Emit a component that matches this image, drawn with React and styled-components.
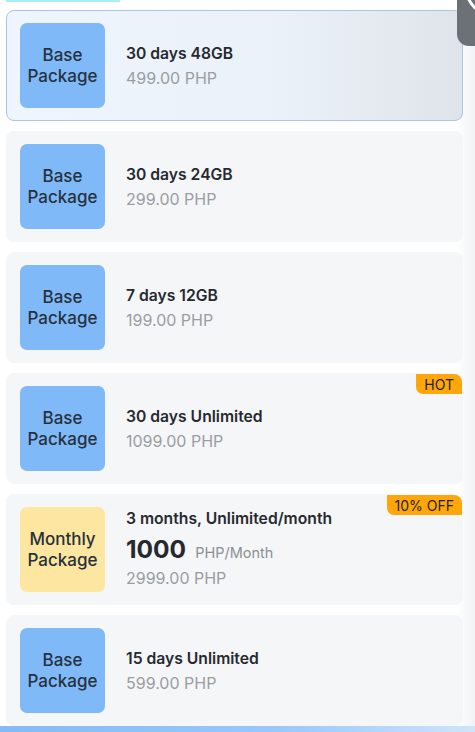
import React from "react";
import styled, { createGlobalStyle } from "styled-components";

const GlobalStyle = createGlobalStyle`
  html, body { margin: 0; padding: 0; background: #fff; }
  body { font-family: Inter, "Noto Sans", Roboto, sans-serif; overflow: hidden; }
`;

const packages = [
  { id: 1, kind: "base", title: "30 days 48GB", price: "499.00 PHP", active: true },
  { id: 2, kind: "base", title: "30 days 24GB", price: "299.00 PHP" },
  { id: 3, kind: "base", title: "7 days 12GB", price: "199.00 PHP" },
  { id: 4, kind: "base", title: "30 days Unlimited", price: "1099.00 PHP", tag: "HOT" },
  {
    id: 5,
    kind: "monthly",
    title: "3 months, Unlimited/month",
    monthly: "1000",
    price: "2999.00 PHP",
    tag: "10% OFF",
  },
  { id: 6, kind: "base", title: "15 days Unlimited", price: "599.00 PHP" },
];

const Page = styled.div`
  position: relative;
  width: 475px;
  height: 732px;
  overflow: hidden;
  background: linear-gradient(90deg, #ffffff 0%, #ffffff 96%, #f1f3f5 100%);
`;

const TopStrip = styled.div`
  width: 114px;
  height: 2px;
  margin-left: 6px;
  margin-bottom: 8px;
  background: #a6f1ef;
`;

const List = styled.div`
  display: flex;
  flex-direction: column;
  gap: 10px;
  padding-left: 6px;
  width: 457px;
`;

const Card = styled.div`
  position: relative;
  box-sizing: border-box;
  height: 111px;
  display: flex;
  align-items: center;
  gap: 21px;
  padding: 0 13px;
  border-radius: 8px;
  background: ${(p) =>
    p.$active
      ? "linear-gradient(90deg, #eff5fc 0%, #ebf1f8 60%, #dfe4ea 100%)"
      : "#f5f6f7"};
  border: 1px solid ${(p) => (p.$active ? "#a9c5e8" : "#f5f6f7")};
`;

const Badge = styled.div`
  flex: none;
  width: 85px;
  height: 85px;
  border-radius: 7px;
  background: ${(p) => (p.$kind === "monthly" ? "#fde69f" : "#80b9f7")};
  display: flex;
  align-items: center;
  justify-content: center;
  text-align: center;
  font-size: 17px;
  font-weight: 500;
  line-height: 21px;
  color: #27313d;
`;

const Info = styled.div`
  display: flex;
  flex-direction: column;
`;

const Title = styled.div`
  font-size: 15.7px;
  font-weight: 600;
  line-height: 25px;
  color: #262a30;
`;

const MonthlyTitle = styled(Title)`
  line-height: 20px;
  margin-bottom: 5px;
`;

const Price = styled.div`
  font-size: 16px;
  font-weight: 400;
  line-height: 25px;
  color: #9a9da2;
`;

const MonthlyRow = styled.div`
  display: flex;
  align-items: baseline;
  gap: 9px;
  height: 32px;
`;

const Amount = styled.span`
  font-size: 24.5px;
  font-weight: 700;
  color: #26292e;
`;

const Unit = styled.span`
  font-size: 14.5px;
  color: #8c8f94;
`;

const Tag = styled.div`
  position: absolute;
  top: 0;
  right: 0;
  height: 20px;
  padding: 0 8px;
  display: flex;
  align-items: center;
  background: #ffa60a;
  border-radius: 0 8px 0 7px;
  font-size: 14px;
  color: #1f1f1f;
`;

const BottomBar = styled.div`
  height: 8px;
  background: linear-gradient(90deg, #85b9f7 0%, #9cc8f8 60%, #cfe4fb 100%);
`;

const Handle = styled.div`
  position: absolute;
  top: -10px;
  right: 0;
  width: 18px;
  height: 56px;
  background: #6c7178;
  border-bottom-left-radius: 12px;
  overflow: hidden;
`;

function PackageCard({ item }) {
  return (
    <Card $active={item.active}>
      <Badge $kind={item.kind}>
        {item.kind === "monthly" ? "Monthly" : "Base"}
        <br />
        Package
      </Badge>
      <Info>
        {item.kind === "monthly" ? (
          <>
            <MonthlyTitle>{item.title}</MonthlyTitle>
            <MonthlyRow>
              <Amount>{item.monthly}</Amount>
              <Unit>PHP/Month</Unit>
            </MonthlyRow>
            <Price>{item.price}</Price>
          </>
        ) : (
          <>
            <Title>{item.title}</Title>
            <Price>{item.price}</Price>
          </>
        )}
      </Info>
      {item.tag && <Tag>{item.tag}</Tag>}
    </Card>
  );
}

export default function App() {
  return (
    <>
      <GlobalStyle />
      <Page>
        <TopStrip />
        <List>
          {packages.map((item) => (
            <PackageCard key={item.id} item={item} />
          ))}
        </List>
        <BottomBar />
        <Handle>
          <svg width="18" height="56" viewBox="0 0 18 56">
            <path d="M11 8 Q14 14 18 18" stroke="#fff" strokeWidth="3" fill="none" strokeLinecap="round" />
          </svg>
        </Handle>
      </Page>
    </>
  );
}
